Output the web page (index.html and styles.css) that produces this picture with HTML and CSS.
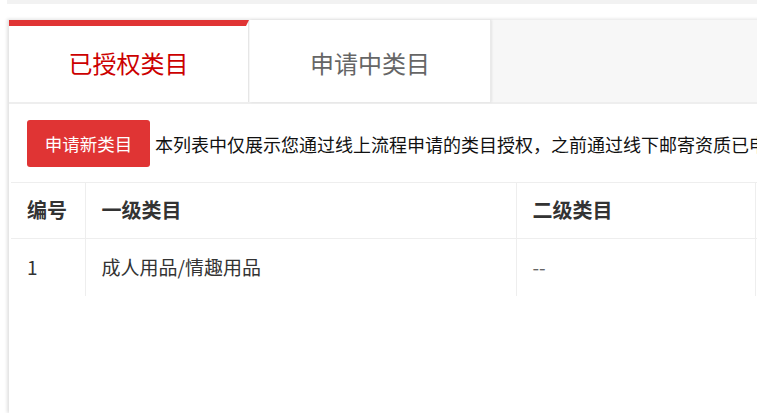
FILE: index.html
```html
<!DOCTYPE html>
<html lang="zh">
<head>
<meta charset="utf-8">
<link rel="stylesheet" href="styles.css">
</head>
<body>
<div class="topbar"></div>
<div class="page">
  <div class="tabs">
    <div class="tab active">已授权类目</div>
    <div class="tab">申请中类目</div>
    <div class="tab-rest"></div>
  </div>
  <div class="panel">
    <div class="toolbar">
      <button class="btn">申请新类目</button>
      <span class="note">本列表中仅展示您通过线上流程申请的类目授权，之前通过线下邮寄资质已申</span>
    </div>
    <table class="grid">
      <colgroup>
        <col class="c1"><col class="c2"><col class="c3"><col class="c4">
      </colgroup>
      <thead>
        <tr><th>编号</th><th>一级类目</th><th>二级类目</th><th></th></tr>
      </thead>
      <tbody>
        <tr><td>1</td><td>成人用品/情趣用品</td><td class="dash">--</td><td></td></tr>
      </tbody>
    </table>
  </div>
</div>
</body>
</html>
```
FILE: styles.css
```css
html, body {
  margin: 0;
  padding: 0;
  background: #fff;
  overflow: hidden;
  font-family: "Noto Sans CJK SC", "Noto Sans", sans-serif;
}
.topbar {
  height: 4px;
  margin-left: 7px;
  background: #f2f2f2;
  margin-bottom: 15px;
}
.page {
  margin-left: 9px;
  box-shadow: -2px 0 3px rgba(0, 0, 0, 0.12);
  height: 394px;
  width: 900px;
}
.tabs {
  display: flex;
  height: 82px;
  background: #f7f7f7;
  border-top: 1px solid #eee;
  border-bottom: 2px solid #eee;
}
.tab {
  position: relative;
  width: 240px;
  background: #fff;
  display: flex;
  align-items: center;
  justify-content: center;
  font-size: 24px;
  color: #666;
  border-right: 1px solid #e8e8e8;
  padding-top: 2px;
  box-sizing: border-box;
}
.tab + .tab {
  margin-left: 1px;
  width: 241px;
  box-shadow: 1px 0 2px rgba(0, 0, 0, 0.08);
  border-right: 1px solid #eaeaea;
}
.tab.active {
  color: #cc0000;
  border-right: 1px solid #e6e6e6;
}
.tab.active::before {
  content: "";
  position: absolute;
  left: 0;
  right: -1px;
  top: 0;
  height: 6px;
  background: #e03434;
  clip-path: polygon(0 0, 100% 0, calc(100% - 3px) 100%, 0 100%);
}
.tab-rest {
  flex: 1;
}
.panel {
  margin-left: 2px;
  padding-top: 16px;
}
.toolbar {
  display: flex;
  align-items: center;
  padding-left: 16px;
  padding-bottom: 15px;
  white-space: nowrap;
}
.btn {
  height: 47px;
  width: 123px;
  border: none;
  border-radius: 3px;
  background: #e03434;
  color: #fff;
  font-family: inherit;
  font-size: 17.5px;
  padding: 0;
  flex: none;
}
.note {
  margin-left: 5px;
  font-size: 18px;
  color: #111;
}
.grid {
  border-collapse: collapse;
  table-layout: fixed;
  width: 900px;
}
.c1 { width: 74px; }
.c2 { width: 431px; }
.c3 { width: 239px; }
.c4 { width: 156px; }
.grid th, .grid td {
  text-align: left;
  padding: 0 0 2px 16px;
  border-left: 1px solid #eee;
  border-right: 1px solid #eee;
  box-sizing: border-box;
}
.grid th:first-child, .grid td:first-child {
  border-left: none;
}
.grid th {
  height: 56px;
  font-size: 20px;
  font-weight: bold;
  color: #333;
  border-top: 1px solid #eee;
  border-bottom: 1px solid #eee;
}
.grid td {
  height: 57px;
  font-size: 19px;
  color: #333;
}
.grid td.dash {
  color: #666;
}
```
